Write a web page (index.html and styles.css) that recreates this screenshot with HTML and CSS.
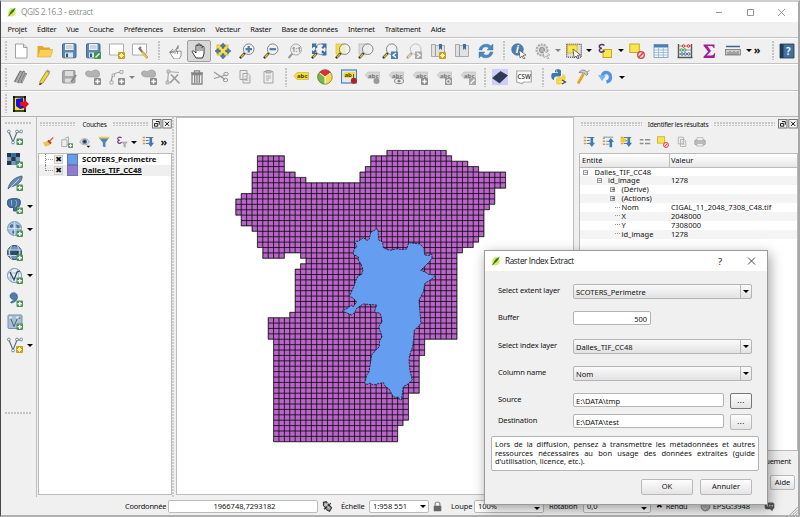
FILE: index.html
```html
<!DOCTYPE html>
<html lang="fr">
<head>
<meta charset="utf-8">
<title>QGIS 2.16.3 - extract</title>
<link rel="stylesheet" href="styles.css">
</head>
<body>
<svg class="defs" aria-hidden="true">
<defs>
<g id="plus"><rect x="9.5" y="9.5" width="6.5" height="6.5" rx="1" fill="#4b9154"/><path d="M12.75 10.7v4.2M10.6 12.8h4.3" stroke="#fff" stroke-width="1.5"/></g>
<g id="gplus"><rect x="9" y="9" width="7" height="7" rx="1" fill="#8d8d8d"/><path d="M12.5 10.3v4.4M10.3 12.5h4.4" stroke="#fff" stroke-width="1.4"/></g>
<g id="star"><rect x="9" y="9" width="7" height="7" rx="1" fill="#c79f16"/><path d="M12.5 10v5M10 12.5h5M10.8 10.8l3.4 3.4M14.2 10.8l-3.4 3.4" stroke="#fff3b0" stroke-width="1"/></g>
<g id="lens"><path d="M5.8 10.2L1 15.2" stroke="#333" stroke-width="2.4"/><path d="M5 11L2 14.2" stroke="#e5bd22" stroke-width="1.5"/><circle cx="9.7" cy="6.2" r="5.3" fill="#f1f1f1" fill-opacity=".75" stroke="#858585" stroke-width="1"/></g>
<g id="tag"><path d="M1 6l3-3h11.5v6.5H4z" fill="#d6d6d6" stroke="#bdbdbd" stroke-width=".6"/><text x="4" y="8.6" font-size="6" font-weight="700" fill="#777">abc</text></g>
<symbol id="logo" viewBox="0 0 16 16"><path d="M8 1C3 2 1 7 2 14l5 1c6 0 8-6 6-11z" fill="#dde85b"/><path d="M14 1C8 3 5 7 3 13l3-2c4-2 6-5 8-10z" fill="#2f8b36"/><path d="M2 15L11 4" stroke="#195b25" stroke-width="1.3"/></symbol>
<symbol id="new" viewBox="0 0 16 16"><path d="M2.5 1h8L14 4.5V15H2.500z" fill="#fff" stroke="#8a8a8a" stroke-width=".8"/><path d="M10.500 1v3.500H14" fill="#ddd" stroke="#8a8a8a" stroke-width=".8"/></symbol>
<symbol id="open" viewBox="0 0 16 16"><path d="M.5 14V3h5l1.500 1.500h6V7" fill="#e2a92c"/><path d="M.5 14L3 6.500h13L13.500 14z" fill="#fbd15a" stroke="#dca62c" stroke-width=".6"/></symbol>
<symbol id="save" viewBox="0 0 16 16"><rect x="1.500" y=".8" width="13.500" height="14" rx="1" fill="#5c88b6" stroke="#426791"/><rect x="4" y="1" width="8.500" height="6" fill="#edf1f4"/><path d="M5 3h6.500M5 5h6.500" stroke="#9cabb9" stroke-width=".8"/><rect x="4" y="9.500" width="8" height="5" fill="#dde4e9"/><rect x="5" y="10.500" width="2" height="3.500" fill="#345575"/></symbol>
<symbol id="saveas" viewBox="0 0 16 16"><use href="#save"/><rect x="9" y="9" width="7" height="7" rx="1" fill="#3f9355"/><path d="M10.500 14.500l4-4" stroke="#eaffea" stroke-width="1.500"/></symbol>
<symbol id="comp" viewBox="0 0 16 16"><path d="M.5 1h14v9l-2 2H.5z" fill="#fff" stroke="#999" stroke-width=".8"/><use href="#star"/></symbol>
<symbol id="compman" viewBox="0 0 16 16"><path d="M.5 1h14v9l-2 2H.5z" fill="#fff" stroke="#999" stroke-width=".8"/><path d="M7 6l2-2M7 5l8.500 10" stroke="#777" stroke-width="2.200"/><path d="M10 9l5 6" stroke="#e7c43a" stroke-width="2"/></symbol>
<symbol id="touch" viewBox="0 0 16 16"><path d="M5 13L2.500 9 6 10 11 3.500l-2 5L14 8v5l-2 3H7z" fill="#fff" stroke="#777" stroke-width=".8"/><path d="M6 6l-3 3 4-1M11 2v4M8 8v3M10.500 8v3" stroke="#777" stroke-width=".8" fill="none"/></symbol>
<symbol id="hand" viewBox="0 0 16 16"><path d="M5 15L1.500 9.500C.5 8 2 7 3.300 8.500L5 10V3c0-1.700 2-1.700 2 0V1.800C7 .3 9 .3 9 1.800V3c0-1.600 2-1.600 2 0v1.500c0-1.500 2-1.500 2 0V11l-1.500 4z" fill="#fff" stroke="#222" stroke-width=".9"/><path d="M7 3v5M9 3v5M11 4v4" stroke="#333" stroke-width=".8"/></symbol>
<symbol id="pan" viewBox="0 0 16 16"><rect x="2" y="2" width="11" height="10" fill="#fae04a" stroke="#d7ad20" stroke-width=".7"/><path d="M8 0l2.800 3.300H9v2H7v-2H5.200zM8 16l-2.800-3.300H7v-2h2v2h1.800zM0 8l3.300-2.800V7h2v2h-2v1.800zM16 8l-3.300 2.800V9h-2V7h2V5.200z" fill="#4c7eb2" stroke="#2d5783" stroke-width=".5"/></symbol>
<symbol id="zin" viewBox="0 0 16 16"><use href="#lens"/><path d="M9.700 3v6.500M6.500 6.200H13" stroke="#477cae" stroke-width="2.200"/></symbol>
<symbol id="zout" viewBox="0 0 16 16"><use href="#lens"/><path d="M6.500 6.200H13" stroke="#477cae" stroke-width="2.200"/></symbol>
<symbol id="z11" viewBox="0 0 16 16"><path d="M5.500 10.500L1.500 15" stroke="#999" stroke-width="2"/><circle cx="9" cy="6.500" r="5.500" fill="#eee" stroke="#aaa"/><text x="4.800" y="8.800" font-size="6.500" font-weight="700" fill="#888">1:1</text></symbol>
<symbol id="zfull" viewBox="0 0 16 16"><use href="#lens"/><path d="M1 .5h5L4.700 2l2 2-1.600 1.600-2-2L1 5.500zM15.500.5v5L14 4l-2 2-1.600-1.600 2-2L10.500.5zM15.500 12.500h-5l1.700-1.600-2-2 1.600-1.600 2 2 1.700-1.700zM1 11V7l1.400 1.400 1.800-1.800 1.500 1.500-1.800 1.800L5.500 11z" fill="#3d6fa4"/></symbol>
<symbol id="zsel" viewBox="0 0 16 16"><rect x="1" y="1" width="9" height="10" fill="#f4e13e" stroke="#d4b72d" stroke-width=".6"/><use href="#lens"/></symbol>
<symbol id="zlay" viewBox="0 0 16 16"><rect x="1" y="1" width="9" height="10" fill="#ddd" stroke="#aaa" stroke-width=".6"/><use href="#lens"/></symbol>
<symbol id="zlast" viewBox="0 0 16 16"><use href="#lens"/><rect x="9" y="8.500" width="7" height="7.500" fill="#4b80b1"/><path d="M14 10l-3 2.200 3 2.300" fill="none" stroke="#fff" stroke-width="1.300"/></symbol>
<symbol id="znext" viewBox="0 0 16 16"><g opacity=".45"><use href="#lens"/></g><rect x="9" y="8.500" width="7" height="7.500" fill="#aaa"/><path d="M11 10l3 2.200-3 2.300" fill="none" stroke="#fff" stroke-width="1.300"/></symbol>
<symbol id="book" viewBox="0 0 16 16"><path d="M1.500 1.500h4v12h-4zM5.500 2.500h9v11h-9z" fill="#e1e1e1" stroke="#999" stroke-width=".8"/><path d="M9 1h3v6l-1.500-1.500L9 7z" fill="#3e6e9f"/></symbol>
<symbol id="bookn" viewBox="0 0 16 16"><use href="#book"/><use href="#star"/></symbol>
<symbol id="refresh" viewBox="0 0 16 16"><path d="M1 7c1-6 8.500-7.500 12-4l2-2v6H9l2-2C8 3 5 3.500 4 7zM15 9c-1 6-8.500 7.500-12 4l-2 2V9h6l-2 2c3 2 6 1.500 7-2z" fill="#4a88c2" stroke="#2f69a2" stroke-width=".4"/></symbol>
<symbol id="ident" viewBox="0 0 16 16"><circle cx="6.500" cy="6.500" r="5.800" fill="#4a80b5" stroke="#315f91" stroke-width=".6"/><text x="4.800" y="10" font-size="10" font-style="italic" font-weight="700" fill="#fff">i</text><path d="M8 7l7 5-3 .5 2 3-1.500.5-1.500-3-2 2z" fill="#fff" stroke="#333" stroke-width=".6"/></symbol>
<symbol id="action" viewBox="0 0 16 16"><circle cx="7" cy="7" r="5.500" fill="#ddd" stroke="#aaa" stroke-width="2" stroke-dasharray="2 1"/><circle cx="7" cy="7" r="2.500" fill="#bbb" stroke="#888"/><path d="M8 7l7 5-3 .5 2 3-1.500.5-1.500-3-2 2z" fill="#eee" stroke="#999" stroke-width=".6"/></symbol>
<symbol id="select" viewBox="0 0 16 16"><rect x=".7" y="1.200" width="14.600" height="13" fill="#dedede" stroke="#222" stroke-width="1" stroke-dasharray="1 1"/><rect x="1.500" y="2" width="9.500" height="8" fill="#fae64b" stroke="#cfae26" stroke-width=".8"/><path d="M7 6l7.500 6-3.200.3 1.800 3-1.400.7-1.700-3-2 1.700z" fill="#fff" stroke="#333" stroke-width=".7"/></symbol>
<symbol id="eps" viewBox="0 0 16 16"><rect x="6" y="6.500" width="8.500" height="8" fill="#fae64b" stroke="#caa620"/><path d="M7.500 2.500C5 .5 1.500 2 2.500 4.200 3 5.300 5 5.200 5 5.200S1.500 5.500 2.500 8C3.500 10 6.500 9 7.500 7.500" fill="none" stroke="#553761" stroke-width="1.600"/></symbol>
<symbol id="desel" viewBox="0 0 16 16"><rect x=".8" y="1" width="9.500" height="8.500" fill="#fae64b" stroke="#caa620"/><circle cx="12" cy="12" r="3.300" fill="#f7d8d8" stroke="#d43e42" stroke-width="1.300"/><path d="M10 14l4-4" stroke="#d43e42" stroke-width="1.200"/></symbol>
<symbol id="table" viewBox="0 0 16 16"><rect x="1" y="1.500" width="14" height="13" fill="#eff5fb" stroke="#7595b6" stroke-width=".8"/><rect x="1" y="1.500" width="14" height="3" fill="#4c80b5"/><path d="M5.500 4v10M10.300 4v10M1 7h14M1 9.500h14M1 12h14" stroke="#98b4d0" stroke-width=".8"/></symbol>
<symbol id="abacus" viewBox="0 0 16 16"><path d="M1.500 1v14M14.500 1v14M.5 14.500h15" stroke="#555" stroke-width="1.400"/><path d="M1 3h14M1 7h14M1 11h14" stroke="#777" stroke-width=".7"/><g fill="#f6c9c9" stroke="#df3838" stroke-width="1"><circle cx="6.500" cy="3" r="1.300"/><circle cx="11.500" cy="3" r="1.300"/></g><g fill="#d5ecd9" stroke="#4d9c5e" stroke-width="1"><circle cx="4.500" cy="7" r="1.300"/><circle cx="7.800" cy="7" r="1.300"/></g><g fill="#d5e2ef" stroke="#4b789f" stroke-width="1"><circle cx="5" cy="11" r="1.300"/><circle cx="8.300" cy="11" r="1.300"/><circle cx="11.600" cy="11" r="1.300"/></g></symbol>
<symbol id="sigma" viewBox="0 0 16 16"><path d="M2.500 1.500h11V5h-1c-.5-1.500-1-2-3-2H6.500L10 8l-4.200 4.500H10c2 0 2.500-.7 3.300-2.200h1L13.500 15h-11v-1.200L7.200 8.500 2.500 2.800z" fill="#a21b9c"/></symbol>
<symbol id="measure" viewBox="0 0 16 16"><path d="M1 3.500h14" stroke="#42658f" stroke-width="1.500"/><rect x=".5" y="6.500" width="15" height="5.500" fill="#ccc" stroke="#777" stroke-width=".8"/><path d="M3 9v3M5 8v4M7 9v3M9 8v4M11 9v3M13 8v4" stroke="#666" stroke-width=".8"/></symbol>
<symbol id="help" viewBox="0 0 16 16"><path d="M1 1h14v14H1z" fill="#42709f" stroke="#27394d" stroke-width=".8"/><path d="M1 1h3.500v14H1z" fill="#24384e"/><text x="7" y="11.500" font-size="10" font-weight="600" fill="#fff">?</text></symbol>
<symbol id="pens" viewBox="0 0 16 16"><path d="M2 13L8 2M5 14l6-12M8 14l5-10" stroke="#777" stroke-width="2.500"/><path d="M3 13L8 3M6 14l5-11M9 13l4-8" stroke="#aaa" stroke-width="1.400"/></symbol>
<symbol id="pencil" viewBox="0 0 16 16"><path d="M3 12.500L9.500 2l3 2L6 14l-3.500 1.500z" fill="#edd14c" stroke="#a38224" stroke-width=".8"/><path d="M9.500 2l3 2 .8-1.500-3-2z" fill="#999"/><path d="M2.500 15.500l2-1" stroke="#222" stroke-width="1.200"/></symbol>
<symbol id="gsave" viewBox="0 0 16 16"><rect x="1.500" y="1.500" width="12.500" height="12.500" rx="1" fill="#aaa" stroke="#999"/><rect x="4" y="2" width="8" height="5" fill="#ddd"/><rect x="4" y="9.500" width="7" height="4" fill="#ddd"/><path d="M15 6l-5 7" stroke="#888" stroke-width="2"/></symbol>
<symbol id="gblob" viewBox="0 0 16 16"><path d="M1 6C-.5 3 2 1.500 4 2c2 1 2.500.5 4.500-.5C13 0 15 3 14.500 6c0 2.500-3 2.500-5 2-3-.5-6 1-8.500-2z" fill="#b3b3b3" stroke="#999" stroke-width=".7"/><use href="#gplus"/></symbol>
<symbol id="gcurve" viewBox="0 0 16 16"><path d="M2.500 13.500C2 6 6 3 13 3" fill="none" stroke="#999" stroke-width="1.200"/><path d="M1 12h3v3H1zM3 5h2.500v2.500H3zM11 1.500h3v3h-3z" fill="#eee" stroke="#999" stroke-width=".7"/><use href="#gplus"/></symbol>
<symbol id="gnode" viewBox="0 0 16 16"><path d="M3.500 2.500l-1 11M2 2.500l12 1" stroke="#aaa" stroke-width="1.200"/><path d="M6 5.500l8.500 9M13 5.500l-8 8.500" stroke="#999" stroke-width="1.600"/><path d="M2 1h3v3H2zM1 12h3v3H1z" fill="#ccc" stroke="#999" stroke-width=".6"/></symbol>
<symbol id="trash" viewBox="0 0 16 16"><path d="M2 4h12M5.500 3.500V1.800h5v1.700M3 5.500h10V15H3zM5.700 6v8M8 6v8M10.300 6v8" fill="none" stroke="#858585" stroke-width="1.300"/></symbol>
<symbol id="cut" viewBox="0 0 16 16"><path d="M1 3l11 7.500M1 9.500L13 6" stroke="#999" stroke-width="1.300"/><ellipse cx="13" cy="5" rx="2.300" ry="1.700" fill="none" stroke="#999"/><ellipse cx="12.500" cy="11" rx="2.300" ry="1.700" fill="none" stroke="#999"/></symbol>
<symbol id="copy" viewBox="0 0 16 16"><path d="M3 1.500h7v9H3zM6 4.500h5l2 2V14H6z" fill="#eee" stroke="#a5a5a5"/><path d="M7.500 7.500h4M7.500 9.500h4M7.500 11.500h4" stroke="#bbb" stroke-width=".8"/></symbol>
<symbol id="paste" viewBox="0 0 16 16"><path d="M3 2.500h9V14H3z" fill="#eee" stroke="#a5a5a5"/><path d="M5 1.500h5V4H5zM5 7h5M5 9h5M5 11h3" fill="#bbb" stroke="#a5a5a5" stroke-width=".9"/></symbol>
<symbol id="abc" viewBox="0 0 16 16"><path d="M1 7.200l3-3.700h11.500v7H4z" fill="#f5df36" stroke="#cdb62c" stroke-width=".7"/><text x="4" y="9.100" font-size="6" font-weight="700" fill="#443c10">abc</text></symbol>
<symbol id="pie" viewBox="0 0 16 16"><circle cx="8" cy="8" r="7.300" fill="#f3df43"/><path d="M8 8v7.300C-.5 15-1 6 2 3.500z" fill="#74bb4a"/><path d="M8 8L2 3.500C5-.5 11-.5 14 3.500z" fill="#dc3231"/><path d="M8 15V8L2.300 3.700M8 8l5.700-4.300" fill="none" stroke="#fff" stroke-width="1"/><circle cx="8" cy="8" r="7.200" fill="none" stroke="#7c6540" stroke-width=".7"/></symbol>
<symbol id="abcpin" viewBox="0 0 16 16"><rect x=".5" y="1" width="15" height="13" fill="#e8e8e8" stroke="#3d82cc" stroke-width="1.200"/><path d="M2 6l2-3h10v6H4z" fill="#f5df36"/><text x="3.500" y="8" font-size="6" font-weight="700" fill="#443c10">ab</text><path d="M12.500 5v6" stroke="#555"/><circle cx="12.800" cy="11.800" r="3" fill="#b42125"/></symbol>
<symbol id="tagpin" viewBox="0 0 16 16"><use href="#tag"/><circle cx="12.500" cy="12" r="3" fill="#999"/></symbol>
<symbol id="tageye" viewBox="0 0 16 16"><use href="#tag"/><ellipse cx="11" cy="12" rx="4.500" ry="2.700" fill="#eee" stroke="#888"/><circle cx="11" cy="12" r="1.600" fill="#888"/></symbol>
<symbol id="tagmove" viewBox="0 0 16 16"><use href="#tag"/><use href="#gplus"/></symbol>
<symbol id="tagrot" viewBox="0 0 16 16"><use href="#tag"/><rect x="9" y="9" width="7" height="7" fill="#999"/><circle cx="12.500" cy="12.500" r="1.900" fill="none" stroke="#fff"/></symbol>
<symbol id="tagedit" viewBox="0 0 16 16"><use href="#tag"/><rect x="9" y="9" width="7" height="7" fill="#aaa"/><path d="M10.500 14.500l4-4" stroke="#fff" stroke-width="1.300"/></symbol>
<symbol id="raster" viewBox="0 0 16 16"><path d="M0 0h16v16H0z" fill="#cdccfb"/><path d="M.5 9L8.500 2.500l7 4L7.500 14z" fill="#2c3b50" stroke="#1e2b3e" stroke-width=".6"/></symbol>
<symbol id="csv" viewBox="0 0 16 16"><path d="M.7 2h14.600v11H8l-2 1.500L.7 13z" fill="#fff" stroke="#aaa" stroke-width="1.200"/><text x="1.600" y="10" font-size="6.200" font-weight="600" fill="#444">CSW</text></symbol>
<symbol id="python" viewBox="0 0 16 16"><path d="M4 1.500C5-.1 9-.1 10 1.500V6c0 2-2 1.500-5 1.500-1.500 0-2 1-2 3.500C-.5 11-.5 4 2 4h5V3.200H4z" fill="#3b78a8"/><path d="M11.500 5c4 0 4 6.500 1.500 7H8v.8h3v1.700C10 16 6 16 5 14.500V10c0-2 2-2 4.500-2 1.500 0 2-1 2-3z" fill="#f4d449"/><circle cx="5.500" cy="2" r=".6" fill="#fff"/><path d="M11 11l3.500 2-3.500 2" fill="none" stroke="#444" stroke-width="1.200"/></symbol>
<symbol id="hammer" viewBox="0 0 16 16"><path d="M3 14.500L8.500 5" stroke="#e5a425" stroke-width="2.800"/><path d="M4 3.500C7-.5 11 .5 13 5l-1.500 1.500C10 4 7.500 3.500 4 3.500zM12 3l2.500-1.500" fill="#ccc" stroke="#777" stroke-width=".8"/></symbol>
<symbol id="undo" viewBox="0 0 16 16"><path d="M4 8.500C4 1 13.500 2.500 12.500 9c-.3 2-2 3.500-4 4" fill="none" stroke="#5294e4" stroke-width="3.400"/><path d="M0 6l8 .5L4 12z" fill="#78b2f0"/></symbol>
<symbol id="extract" viewBox="0 0 16 16"><path d="M1 1h11v14H1z" fill="#f4f000" stroke="#111" stroke-width="1.600"/><path d="M3 3l7-1 1 10-4 1-4-3z" fill="#1010ed"/><path d="M7 6h4V3l5 5-5 5v-3H7z" fill="#f40b11"/><path d="M0 0h2v2H0zM11 0h2v2h-2zM0 14h2v2H0zM11 14h2v2h-2z" fill="#111"/></symbol>
<symbol id="vshape" viewBox="0 0 16 16"><path d="M2 3l4 10 4-10h4" fill="none" stroke="#587386" stroke-width="1.200"/><g fill="#f1f5f8" stroke="#587386" stroke-width=".8"><circle cx="1.800" cy="2.500" r="1.400"/><circle cx="6" cy="13.500" r="1.400"/><circle cx="10" cy="2.500" r="1.400"/><circle cx="14.200" cy="2.500" r="1.400"/></g></symbol>
<symbol id="vec" viewBox="0 0 16 16"><use href="#vshape"/><use href="#plus"/></symbol>
<symbol id="vnew" viewBox="0 0 16 16"><use href="#vshape"/><use href="#star"/></symbol>
<symbol id="rast" viewBox="0 0 16 16"><path d="M0 1h13v12H0z" fill="#7699bd"/><path d="M0 1h4.300v4H0zM8.600 1H13v4H8.600zM4.300 5h4.300v4H4.300zM0 9h4.300v4H0z" fill="#23384e"/><path d="M4.300 1h4.300v4H4.300zM8.600 9H13v4H8.600z" fill="#3d6b98"/><use href="#plus"/></symbol>
<symbol id="feather" viewBox="0 0 16 16"><path d="M1 14C2 7 8 2 15 1c1 5-5 10-12 11z" fill="#668bb0" stroke="#3c5b7c" stroke-width=".8"/><path d="M1 15L12 4" stroke="#d6e4ef" stroke-width=".8"/><use href="#plus"/></symbol>
<symbol id="pg" viewBox="0 0 16 16"><path d="M1 2c3-2 10-2 12 0 1 3 0 6-1.500 7H9.500v4h-3V9.500H3C0 8 0 4 1 2z" fill="#44739f" stroke="#28425e" stroke-width=".8"/><path d="M4.500 2v5.500M8.500 2c2 2 1 5 0 7" fill="none" stroke="#b6cbe0" stroke-width=".7"/><use href="#plus"/></symbol>
<symbol id="globe" viewBox="0 0 16 16"><circle cx="7.500" cy="7.500" r="7" fill="#a9c3dd" stroke="#6183a6" stroke-width=".8"/><path d="M3 4l2.500-1 1 2-2 2.500L3 6zM9 3.500l3.500 1v3l-2 1-1-2.500zM6 9l2 1.500-1 3-2-2z" fill="#4f76a0"/><path d="M.5 7.500h14M7.500.5v14" stroke="#e5eef6" stroke-width=".6"/><use href="#plus"/></symbol>
<symbol id="wms" viewBox="0 0 16 16"><circle cx="7.500" cy="7.500" r="7" fill="#6a97bd" stroke="#25384e"/><path d="M3 5.500h9V10H3z" fill="#2f4a66"/><path d="M1 5h13M1 10.500h13M4.500 1c-3 5-2 9 0 13M10.500 1c3 5 2 9 0 13" fill="none" stroke="#d3e1ec" stroke-width=".9"/><use href="#plus"/></symbol>
<symbol id="wfs" viewBox="0 0 16 16"><circle cx="7.500" cy="7.500" r="7" fill="#e8f0f8" stroke="#6c91b4"/><path d="M1 5h13M1 10h13M5 1c-2 5-2 9 0 13M10 1c2 5 2 9 0 13" fill="none" stroke="#8fadc9" stroke-width=".7"/><path d="M3 4l4 8 3-8 3-1" fill="none" stroke="#2f4355" stroke-width="1.200"/><use href="#plus"/></symbol>
<symbol id="comma" viewBox="0 0 16 16"><path d="M3 5c0-4 7-5 7.500.5C10.500 9 8 11.500 4 12l-.3-1C6 10 7 9 7 8 5 9 3 7 3 5z" fill="#4b7dad" stroke="#2c5075" stroke-width=".6"/><use href="#plus"/></symbol>
<symbol id="virt" viewBox="0 0 16 16"><rect x="1" y="1" width="14" height="13.500" rx="1" fill="#a8bfd5" stroke="#6f90b1"/><path d="M3.500 4l3.500 8.500L10.500 4h3" fill="none" stroke="#446078"/><circle cx="3.500" cy="3.500" r="1.300" fill="#eee"/><circle cx="10.500" cy="3.500" r="1.300" fill="#eee"/><use href="#plus"/></symbol>
<symbol id="brush" viewBox="0 0 16 16"><path d="M9 8l6-6" stroke="#c57431" stroke-width="2"/><path d="M1 8c4 1 5-1 7-2l4 4c-2 3-5 4-8 4z" fill="#eac648"/><path d="M8 6l4 4" stroke="#c93a31" stroke-width="2.500"/></symbol>
<symbol id="group" viewBox="0 0 16 16"><path d="M1 5h7v9H1zM5 3l5-2v10l-2 1" fill="#eee" stroke="#999"/><use href="#plus"/></symbol>
<symbol id="eye" viewBox="0 0 16 16"><path d="M1 8c3-6 10-6 13 0-3 5-10 5-13 0z" fill="#ddd" stroke="#999"/><circle cx="7.500" cy="7.500" r="3.300" fill="#4e789f"/><circle cx="7.500" cy="7.500" r="1.500" fill="#222"/><path d="M10 13h5l-2.500 2.500z"/></symbol>
<symbol id="funnel" viewBox="0 0 16 16"><path d="M1 2h14L10 9v6l-3.500-1V9z" fill="#4f85b9"/><path d="M1 1h14v2.500H1z" fill="#e4c955"/></symbol>
<symbol id="epsf" viewBox="0 0 16 16"><path d="M7.500 2.500C5 .5 1.500 2 2.500 4.200 3 5.500 5 5.700 5 5.700S1.500 6 2.500 8.500C3.500 10.500 6.500 10 7.500 8" fill="none" stroke="#793e84" stroke-width="1.600"/><path d="M8 8h7l-2.500 3v4l-2-1v-3z" fill="#bbb" stroke="#888" stroke-width=".6"/></symbol>
<symbol id="expand" viewBox="0 0 16 16"><path d="M1 2h3M1 6h3M1 10h3" stroke="#d99a3c" stroke-width="2"/><path d="M5 2h10M5 6h4M5 10h4" stroke="#557ca2" stroke-width="1.500"/><path d="M10 2h3.500v7H16l-4.200 5.500L7.500 9H10z" fill="#4379ad"/></symbol>
<symbol id="collapse" viewBox="0 0 16 16"><path d="M1 3h3M1 7h3M1 11h3" stroke="#d99a3c" stroke-width="2"/><path d="M2 1.500h13M5 7h3M5 11h4" stroke="#557ca2"/><path d="M10 15h3.500V8H16l-4.200-5.500L7.500 8H10z" fill="#4379ad"/></symbol>
<symbol id="expnew" viewBox="0 0 16 16"><use href="#expand"/><path d="M4.500 1l1.300 2.500 3-.5-1.500 2.700L9 8l-3-.3L4.500 10 3.300 7.500 0 8l1.800-2.500L0 3l3 .3z" fill="#f1cb2e"/></symbol>
<symbol id="lines" viewBox="0 0 16 16"><path d="M1 5h5M1 10h5M8 5h7M8 10h7" stroke="#8e8e8e" stroke-width="2"/></symbol>
<symbol id="print" viewBox="0 0 16 16"><rect x="1" y="5" width="14" height="7" rx="2" fill="#bbb" stroke="#999"/><path d="M4 2h8v4H4zM4 10h8v3.500H4z" fill="#eee" stroke="#aaa" stroke-width=".8"/></symbol>
<symbol id="track" viewBox="0 0 16 16"><path d="M2 2l4-1 8 9-3 5-4-2-5-7zM3 12l10-9" fill="#999" stroke="#333" stroke-width="1.500"/><path d="M5 4l6 7M3 7l6-4" stroke="#eee"/></symbol>
<symbol id="lock" viewBox="0 0 16 16"><path d="M4.500 8V4.500c0-4 7-4 7 0V8" fill="none" stroke="#888" stroke-width="1.700"/><rect x="2.500" y="7" width="11" height="8" rx="1" fill="#666"/></symbol>
<symbol id="crs" viewBox="0 0 16 16"><circle cx="8" cy="8" r="6.500" fill="#aaa" stroke="#666"/><path d="M2 7l5 5 7-8" stroke="#ddd" fill="none"/></symbol>
<symbol id="bubble" viewBox="0 0 16 16"><path d="M3 2h10l2 2v6l-2 2-1 3-3-3H3l-2-2V4z" fill="#555"/><path d="M4 7h2M7.500 7h2M11 7h2" stroke="#eee" stroke-width="1.400"/></symbol>
</defs>
</svg>

<div class="window">
  <header class="titlebar">
    <svg class="logo"><use href="#logo"/></svg><span class="caption">QGIS 2.16.3 - extract</span>
    <svg class="winctl" viewBox="0 0 72 12"><path d="M1 6.500h6M32.500 3.500h6v6h-6zM63 3l7 7M70 3l-7 7" fill="none" stroke="#888" stroke-width=".9"/></svg>
  </header>
  <nav class="menu">
    <span>Projet</span><span>Éditer</span><span>Vue</span><span>Couche</span><span>Préférences</span><span>Extension</span><span>Vecteur</span><span>Raster</span><span>Base de données</span><span>Internet</span><span>Traitement</span><span>Aide</span>
  </nav>

  <div class="toolbar">
    <i class="grip first"></i>
    <b><svg><use href="#new"/></svg></b><b><svg><use href="#open"/></svg></b><b><svg><use href="#save"/></svg></b><b><svg><use href="#saveas"/></svg></b><b><svg><use href="#comp"/></svg></b><b><svg><use href="#compman"/></svg></b>
    <i class="grip"></i>
    <b><svg><use href="#touch"/></svg></b><b class="pressed"><svg><use href="#hand"/></svg></b><b><svg><use href="#pan"/></svg></b><b><svg><use href="#zin"/></svg></b><b><svg><use href="#zout"/></svg></b><b><svg><use href="#z11"/></svg></b><b><svg><use href="#zfull"/></svg></b><b><svg><use href="#zsel"/></svg></b><b><svg><use href="#zlay"/></svg></b><b><svg><use href="#zlast"/></svg></b><b><svg><use href="#znext"/></svg></b><b><svg><use href="#bookn"/></svg></b><b><svg><use href="#book"/></svg></b><b><svg><use href="#refresh"/></svg></b>
    <i class="grip snug"></i>
    <b><svg><use href="#ident"/></svg></b><b><svg><use href="#action"/></svg></b><u class="dim"></u><b><svg><use href="#select"/></svg></b><u></u><b><svg><use href="#eps"/></svg></b><u></u><b><svg><use href="#desel"/></svg></b><b><svg><use href="#table"/></svg></b><b><svg><use href="#abacus"/></svg></b><b><svg><use href="#sigma"/></svg></b><b><svg><use href="#measure"/></svg></b><u></u><span class="more">»</span>
    <i class="grip tight"></i>
    <b><svg><use href="#help"/></svg></b>
  </div>

  <div class="toolbar second">
    <i class="grip first"></i>
    <b><svg><use href="#pens"/></svg></b><b><svg><use href="#pencil"/></svg></b><b><svg><use href="#gsave"/></svg></b><b><svg><use href="#gblob"/></svg></b><b><svg><use href="#gcurve"/></svg></b><u class="dark"></u><b><svg><use href="#gblob"/></svg></b><b><svg><use href="#gnode"/></svg></b><b><svg><use href="#trash"/></svg></b><b><svg><use href="#cut"/></svg></b><b><svg><use href="#copy"/></svg></b><b><svg><use href="#paste"/></svg></b>
    <i class="grip snug"></i>
    <b><svg><use href="#abc"/></svg></b><b><svg><use href="#pie"/></svg></b><b><svg><use href="#abcpin"/></svg></b><b><svg><use href="#tagpin"/></svg></b><b><svg><use href="#tageye"/></svg></b><b><svg><use href="#tagmove"/></svg></b><b><svg><use href="#tagrot"/></svg></b><b><svg><use href="#tagedit"/></svg></b>
    <i class="grip snug"></i>
    <b><svg><use href="#raster"/></svg></b><b><svg><use href="#csv"/></svg></b>
    <i class="grip"></i>
    <b><svg><use href="#python"/></svg></b><b><svg><use href="#hammer"/></svg></b><b><svg><use href="#undo"/></svg></b><u></u>
  </div>

  <div class="toolbar third"><i class="grip first"></i><b><svg><use href="#extract"/></svg></b></div>

  <main class="work">
    <aside class="sources">
      <i class="hgrip"></i>
      <div><svg><use href="#vec"/></svg></div><div><svg><use href="#rast"/></svg></div><div><svg><use href="#feather"/></svg></div><div><svg><use href="#pg"/></svg><u></u></div><div><svg><use href="#globe"/></svg><u></u></div><div><svg><use href="#wms"/></svg></div><div><svg><use href="#wfs"/></svg><u></u></div><div><svg><use href="#comma"/></svg></div><div><svg><use href="#virt"/></svg></div><div><svg><use href="#vnew"/></svg><u></u></div>
      <i class="hgrip low"></i>
    </aside>

    <section class="dock layers">
      <div class="dockhead"><i></i><span>Couches</span><i></i><svg class="dockbtn" viewBox="0 0 20 10"><rect x=".5" y=".5" width="8.500" height="8.500" fill="#eee" stroke="#777"/><path d="M4 2.500h3.300v3.200M2.500 4.500h3.200v2.700H2.500z" fill="none" stroke="#111" stroke-width=".9"/><rect x="10.800" y=".5" width="8.500" height="8.500" fill="#f6f6f6" stroke="#777"/><path d="M13 2.700l4.200 4.200M17.200 2.700L13 6.900" stroke="#000" stroke-width="1"/></svg></div>
      <div class="dockbar"><svg><use href="#brush"/></svg><svg><use href="#group"/></svg><svg><use href="#eye"/></svg><svg><use href="#funnel"/></svg><svg><use href="#epsf"/></svg><u></u><svg><use href="#expand"/></svg><span>»</span></div>
      <div class="layerlist">
        <div class="layer"><i class="branch"></i><em>✖</em><s class="blue"></s><span>SCOTERS_Perimetre</span></div>
        <div class="layer active"><i class="branch end"></i><em>✖</em><s class="purple"></s><span>Dalles_TIF_CC48</span></div>
      </div>
    </section>
    <div class="splitter"></div>

    <section class="map">
      <svg viewBox="177 118 397 377" class="canvas">
        <clipPath id="tiles"><path transform="translate(235.800 150.400) scale(5.396)" d="M4 1H9V4H11V5H13V6H23V4H24V3H25V1H28V0H39V1H40V2H43V3H45V4H50V7H48V10H47V11H46V16H45V17H44V18H42V19H41V35H35V38H34V45H32V50H31V51H30V54H7V35H6V31H10V30H11V22H12V21H13V20H12V19H9V20H5V18H4V15H3V14H1V12H0V9H1V8H3V4H4z"/></clipPath>
        <g clip-path="url(#tiles)"><path d="M230 145h280v300H230z" fill="#b866c8"/><path id="grid" stroke="#000" stroke-opacity=".8" stroke-width=".95"/></g>
        <path transform="translate(235.800 150.400) scale(5.396)" d="M4 1H9V4H11V5H13V6H23V4H24V3H25V1H28V0H39V1H40V2H43V3H45V4H50V7H48V10H47V11H46V16H45V17H44V18H42V19H41V35H35V38H34V45H32V50H31V51H30V54H7V35H6V31H10V30H11V22H12V21H13V20H12V19H9V20H5V18H4V15H3V14H1V12H0V9H1V8H3V4H4z" fill="none" stroke="#222" stroke-width=".14"/>
        <path d="M370.700 232.300L374 230.500 376.700 229 378 229.500 378.700 240 382.700 242.300 383.300 247.700 387 249.500 390.700 250.300 396 248.800 402 249.500 406.700 249 408.700 242.700 414 243.300 420 244 424 248.300 424.700 255 429 255.500 432 254 432 258 430 261 425 266 420.700 270.300 425 272 428.300 274.300 435.700 275 431.700 279 425 283.300 423.300 292 419 300 420 312 421 323.300 418 327 414.300 330 413.500 340 412.700 346.700 410 354 409 360 410 371 412.300 380 408 384 403.300 386.700 402.500 393 401.300 400 399.500 399.500 398.500 397 396 397.500 393.300 396.700 389 389 385 386 383.300 382.700 379 383.500 373.300 385 370 383 367 384.500 364.700 383.300 366.700 375 369 372 371.700 355 375 351 379.300 346.700 379.500 341 382 336.700 378.700 326.700 382 321.700 381 316 380 313.300 376 312.500 374.300 311.700 376.700 305 370 304.500 363.300 304 356.700 308.300 355 312 351.700 315 347 313 342.300 311 347 308.500 351.700 305 353 307 356.700 302 353 298 349 296 350.500 294 354 286 356 280 358 276 361.500 274.500 363 270 361 264 358.300 260 358.500 257 353.300 254.300 354 249.500 356.700 246.700 354.300 240.700 358 241.500 363.300 237.700 367 240.500 369.300 239z" fill="#659df1" stroke="#17263b" stroke-width=".9" stroke-dasharray="2.200 .8"/>
      </svg>
    </section>

    <section class="dock results">
      <div class="dockhead"><i></i><span>Identifier les résultats</span><i></i><svg class="dockbtn" viewBox="0 0 20 10"><rect x=".5" y=".5" width="8.500" height="8.500" fill="#eee" stroke="#777"/><path d="M4 2.500h3.300v3.200M2.500 4.500h3.200v2.700H2.500z" fill="none" stroke="#111" stroke-width=".9"/><rect x="10.800" y=".5" width="8.500" height="8.500" fill="#f6f6f6" stroke="#777"/><path d="M13 2.700l4.200 4.200M17.200 2.700L13 6.900" stroke="#000" stroke-width="1"/></svg></div>
      <div class="dockbar"><svg><use href="#expand"/></svg><svg><use href="#collapse"/></svg><svg><use href="#expnew"/></svg><svg><use href="#lines"/></svg><svg><use href="#desel"/></svg><svg><use href="#copy"/></svg><svg><use href="#print"/></svg></div>
      <div class="tree">
        <div class="row head"><span>Entité</span><span>Valeur</span></div>
        <div class="row"><span class="l0"><q>−</q>Dalles_TIF_CC48</span><span></span></div>
        <div class="row alt"><span class="l1"><q>−</q>id_image</span><span>1278</span></div>
        <div class="row"><span class="l2"><q>+</q>(Dérivé)</span><span></span></div>
        <div class="row alt"><span class="l2"><q>+</q>(Actions)</span><span></span></div>
        <div class="row"><span class="l2"><q class="leaf"></q>Nom</span><span>CIGAL_11_2048_7308_C48.tif</span></div>
        <div class="row alt"><span class="l2"><q class="leaf"></q>X</span><span>2048000</span></div>
        <div class="row"><span class="l2"><q class="leaf"></q>Y</span><span>7308000</span></div>
        <div class="row alt"><span class="l2"><q class="leaf"></q>id_image</span><span>1278</span></div>
      </div>
      <div class="mode">uement</div>
      <div class="helprow"><button>Aide</button></div>
    </section>
  </main>

  <footer class="status">
    <span class="coordlabel">Coordonnée</span><div class="field coord">1966748,7293182</div><svg><use href="#track"/></svg>
    <span class="scale">Échelle</span><div class="field combo">1:958 551<u></u></div><svg><use href="#lock"/></svg>
    <span class="zoom">Loupe</span><div class="field spin">100%<u></u></div>
    <span class="rot">Rotation</span><div class="field spin turn">0,0<u></u></div>
    <em>✖</em><span class="render">Rendu</span><svg class="crs"><use href="#crs"/></svg><span>EPSG:3948</span><svg class="bubble"><use href="#bubble"/></svg>
    <svg class="sizer" viewBox="0 0 10 10"><path d="M1 10l9-9M4 10l6-6M7 10l3-3" stroke="#999"/></svg>
  </footer>
</div>

<div class="dialog">
  <header><svg class="logo"><use href="#logo"/></svg><span>Raster Index Extract</span><svg class="dlgctl" viewBox="0 0 40 12"><text x="2" y="9.500" font-size="9.500" fill="#222">?</text><path d="M32 2.500l7 7M39 2.500l-7 7" stroke="#333" stroke-width=".9"/></svg></header>
  <div class="form">
    <label>Select extent layer</label><div class="select">SCOTERS_Perimetre<u></u></div>
    <label>Buffer</label><div class="input num">500</div>
    <label>Select index layer</label><div class="select">Dalles_TIF_CC48<u></u></div>
    <label>Column name</label><div class="select">Nom<u></u></div>
    <label>Source</label><div class="path"><div class="input">E:\DATA\tmp</div><button class="focus">...</button></div>
    <label>Destination</label><div class="path"><div class="input">E:\DATA\test</div><button>...</button></div>
  </div>
  <p class="note">Lors de la diffusion, pensez à transmettre les métadonnées et autres ressources nécessaires au bon usage des données extraites (guide d'utilisation, licence, etc.).</p>
  <div class="actions"><button>OK</button><button>Annuler</button></div>
</div>
<script src="grid.js"></script>
</body>
</html>
```
FILE: styles.css
```css
* { box-sizing: border-box; }
body { margin: 0; width: 800px; height: 517px; overflow: hidden; position: relative; background: #c9c9c9; font: 7.5px/9px "Noto Sans", "Open Sans", sans-serif; color: #111; }
svg { display: block; width: 16px; height: 16px; flex: none; }
svg text { font-family: "Noto Sans", sans-serif; letter-spacing: 0; }
.defs { position: absolute; width: 0; height: 0; }
span, label { white-space: nowrap; }
i, b, u, s, em { font-style: normal; font-weight: 400; text-decoration: none; flex: none; }
u { display: block; width: 0; height: 0; border: 3px solid transparent; border-top: 3.500px solid #000; border-bottom: 0; }
button { font: inherit; padding: 0; color: #111; background: linear-gradient(#fdfdfd, #e4e4e4); border: 1px solid #b9b9b9; border-radius: 2px; }

.window { height: 517px; display: flex; flex-direction: column; border-left: 1px solid #4a4650; border-top: 2px solid #cfcfcf; border-right: 2px solid #a8a8a8; border-bottom: 2px solid #b0b0b0; background: #f0f0f0; }
.titlebar { height: 20px; background: #fff; display: flex; align-items: center; padding: 0 11px 0 6px; flex: none; }
.logo { width: 10px; height: 10px; }
.caption { margin-left: 4px; color: #8c8c8c; font: 8.300px/10px "Open Sans", sans-serif; letter-spacing: -.33px; flex: 1; }
.winctl { width: 72px; height: 12px; }
.menu { height: 15px; flex: none; display: flex; gap: 10px; padding: 3px 0 0 6.500px; letter-spacing: -.24px; }

.toolbar { height: 26px; flex: none; display: flex; align-items: center; border-top: 1px solid #c2c2c2; box-shadow: inset 0 1px #fff; }
.toolbar.second { height: 27px; }
.toolbar b { width: 23.900px; height: 22px; flex: none; display: flex; align-items: center; justify-content: center; }
.toolbar .pressed { background: #d8d8d8; border: 1px solid #a0a0a0; border-radius: 2px; }
.toolbar u { margin: 0 1px 0 1px; }
.toolbar .dim, .toolbar .dark { opacity: .45; }
.toolbar .dim { margin-left: 0; }
.toolbar .dark { margin-right: 2px; }
.grip { width: 3px; height: 19px; margin: 0 2px 0 6px; background: radial-gradient(circle at 1px 1px, #c5c5c5 .8px, transparent 1px) 0 0 / 3px 3px; }
.grip.first { margin-left: 4px; margin-right: 1px; }
.grip.snug { margin: 0 1px 0 5px; }
.second .snug { margin: 0 .5px 0 4.500px; }
.grip.tight { margin: 0 0 0 11px; }
.more { font-size: 11px; margin-left: 1px; font-weight: 700; margin-top: -2px; }

.work { flex: 1; min-height: 0; display: flex; border-top: 1px solid #b5b5b5; }
.sources { width: 36px; flex: none; border-right: 1px solid #bdbdbd; }
.sources div { height: 23.200px; display: flex; align-items: center; padding-left: 6px; gap: 4px; }
.hgrip { display: block; height: 3px; margin: 5px 4px 0; background: radial-gradient(circle at 1px 1px, #c5c5c5 .8px, transparent 1px) 0 0 / 3px 3px; }
.hgrip.low { margin-top: 55px; }
.dock { display: flex; flex-direction: column; flex: none; }
.dockhead { height: 14px; display: flex; align-items: center; gap: 6px; padding: 0 0 0 2px; font-size: 6.500px; }
.layers .dockhead { letter-spacing: -.25px; }
.dockhead i { flex: 1; height: 4px; background: radial-gradient(circle at 1px 1px, #c5c5c5 .8px, transparent 1px) 0 0 / 3px 3px; }
.results .dockhead { letter-spacing: -.25px; }
.dockbtn { width: 20px; height: 10px; margin-left: -3px; }
.dockbar { height: 22px; display: flex; align-items: center; }
.dockbar svg { width: 12px; height: 12px; }
.layers { width: 135px; padding-left: 1px; }
.layers .dockbar { padding-left: 4px; gap: 6.500px; }
.layers .dockbar u { margin: 0 -1px 0 -4px; }
.layers .dockbar span { font-size: 11px; font-weight: 700; margin-top: -2px; }
.layerlist { flex: 1; background: #fff; border: 1px solid #bbb; margin-bottom: 2px; }
.layer { height: 11px; display: flex; align-items: center; font-weight: 700; font-size: 7.700px; }
.layer.active { background: #efefef; }
.layer.active span { text-decoration: underline; }
.branch { width: 8px; height: 11px; margin-left: 6px; border-left: 1px dotted #888; background: linear-gradient(90deg, #999 50%, transparent 50%) 0 5px / 2px 1px repeat-x; }
.branch.end { height: 6px; margin-bottom: 5px; }
.layer em { width: 9px; height: 9px; margin-left: 1px; background: #eee; border: 1px solid #ccc; font: 700 8px/7px "DejaVu Sans", sans-serif; display: flex; justify-content: center; }
.layer s { width: 11px; height: 11px; margin: 0 4px 0 4px; border: 1px solid #6b78a5; }
.blue { background: #659df1; }
.purple { background: #9479d2; }
.splitter { width: 4px; flex: none; background: radial-gradient(circle at 1px 1px, #ccc .8px, transparent 1px) 0 0 / 4px 3px; }
.map { width: 398px; flex: none; background: #fff; border: 1px solid #bdbdbd; margin-bottom: 2px; overflow: hidden; }
.canvas { width: 397px; height: 377px; }
.results { flex: 1; padding-left: 5px; min-width: 0; }
.results .dockbar { padding-left: 4px; gap: 6.500px; }
.tree { height: 298px; flex: none; background: #fff; border: 1px solid #bbb; overflow: hidden; }
.row { display: grid; grid-template-columns: 89px 1fr; height: 8.900px; line-height: 8.900px; }
.row > span { padding-left: 2px; }
.row.alt { background: #f4f4f4; }
.row.head { height: 13.500px; line-height: 13px; background: linear-gradient(#fff, #e6e6e6); border-bottom: 1px solid #bbb; }
.row.head span + span { border-left: 1px solid #bbb; padding-left: 1px; }
.row .l0 { padding-left: 3px; }
.row .l1 { padding-left: 16.500px; }
.row .l2 { padding-left: 30px; }
q { quotes: none; display: inline-block; width: 5px; height: 5px; border: 1px solid #999; font: 5px/3.500px "DejaVu Sans", sans-serif; text-align: center; margin-right: 6.500px; vertical-align: 1px; }
q::before, q::after { content: none; }
q.leaf { border-width: 0 0 1px 0; border-style: dotted; height: 1px; margin: 0 2px 0 4.500px; width: 5px; vertical-align: 2.500px; }
.mode { text-align: right; padding: 6px 7px 0 0; letter-spacing: -.3px; }
.helprow { display: flex; justify-content: flex-end; padding: 9px 3px 0 0; }
.helprow button { width: 25px; height: 15px; }

.status { height: 18px; flex: none; display: flex; align-items: center; padding-left: 124px; position: relative; }
.field { height: 13px; background: #fff; border: 1px solid #bbb; border-radius: 2px; line-height: 11px; display: flex; align-items: center; padding-left: 3px; flex: none; }
.status svg { width: 11px; height: 11px; }
.coordlabel { width: 41px; letter-spacing: -.25px; }
.coord { width: 150px; justify-content: center; margin: 0 4px 0 2px; }
.scale { margin-left: 8px; width: 28px; letter-spacing: -.15px; }
.combo { width: 60px; justify-content: space-between; margin-right: 3px; padding-right: 2px; }
.zoom { margin-left: 8px; width: 23px; letter-spacing: -.1px; }
.spin { width: 70px; justify-content: space-between; padding-right: 3px; }
.spin u { margin-top: 5px; }
.rot { margin-left: 5px; width: 34px; letter-spacing: -.2px; }
.turn { width: 68px; }
.status em { margin: 0 3px 0 5px; font: 8px/8px "DejaVu Sans", sans-serif; }
.render { width: 34px; letter-spacing: -.2px; }
.crs { margin-right: 2px; }
.bubble { margin-left: 14px; }
.status .sizer { width: 9px; height: 9px; margin: 8px 0 0 auto; }

.dialog { position: absolute; left: 484px; top: 250px; width: 284px; height: 255px; background: #f0f0f0; border: 1px solid #9a9a9a; box-shadow: 2px 4px 12px rgba(0, 0, 0, .38); }
.dialog header { height: 20px; background: #fff; display: flex; align-items: center; padding: 0 11px 0 6px; font: 8.200px/10px "Open Sans", sans-serif; }
.dialog header span { flex: 1; margin-left: 4px; letter-spacing: -.38px; }
.dlgctl { width: 40px; height: 12px; }
.form { display: grid; grid-template-columns: 75px 179px; grid-template-rows: 27.300px 27.300px 27.400px 26.700px 21px 20px; padding: 13px 0 0 13px; }
label { padding-top: 2px; letter-spacing: -.12px; }
.select, .input { height: 15px; border: 1px solid #b4b4b4; border-radius: 2px; line-height: 14px; padding-left: 2px; }
.select { display: flex; justify-content: space-between; background: linear-gradient(#fafafa, #e2e2e2); position: relative; }
.select u { align-self: center; margin-right: 2.500px; }
.select::after { content: ""; position: absolute; right: 10px; top: 0; bottom: 0; border-left: 1px solid #b9b9b9; }
.input { background: #fff; height: 14px; }
.num { width: 78px; text-align: right; padding-right: 3px; }
.path { display: flex; justify-content: space-between; }
.path .input { width: 151px; }
.path button { width: 22px; height: 16px; letter-spacing: .5px; }
.path .focus { border-color: #777; }
.note { margin: 2px 8px 0 6px; height: 35px; background: #fff; border: 1px solid #b4b4b4; border-radius: 2px; padding: 3px 3px 0 3px; text-align: justify; line-height: 8.900px; }
.actions { display: flex; justify-content: flex-end; gap: 7px; padding: 8px 15px 0 0; }
.actions button { width: 52px; height: 16px; }
```
FILE: grid.js
```js
// Tile grid lines of the index layer
const step = 5.396;
let d = "";
for (let c = 0; c <= 50; c++) d += `M${235.8 + c * step} 150V442`;
for (let r = 0; r <= 54; r++) d += `M235 ${150.4 + r * step}H506`;
document.getElementById("grid").setAttribute("d", d);
```
